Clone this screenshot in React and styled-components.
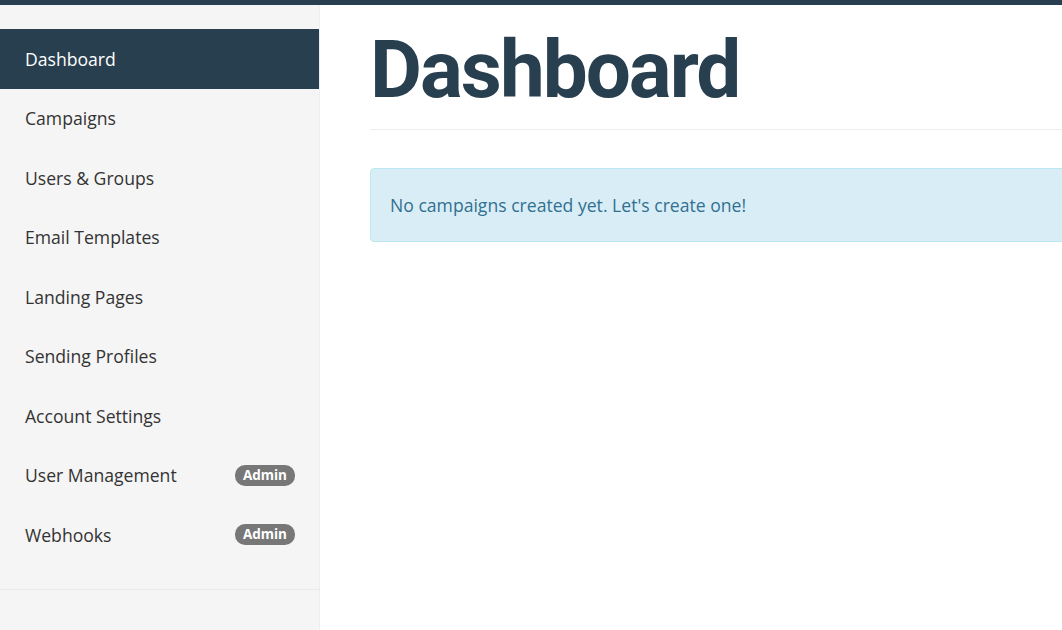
import React from 'react';
import styled, { createGlobalStyle } from 'styled-components';

const GlobalStyle = createGlobalStyle`
  html, body {
    margin: 0;
    padding: 0;
    background: #fff;
    overflow: hidden;
  }
  body {
    font-family: 'Open Sans', 'Liberation Sans', sans-serif;
    color: #333;
  }
`;

const TopBar = styled.div`
  height: 5px;
  background: #283f50;
`;

const Layout = styled.div`
  display: flex;
  height: 625px;
`;

const Sidebar = styled.nav`
  flex: 0 0 319px;
  background: #f5f5f5;
  border-right: 1px solid #eee;
  padding-top: 24px;
  display: flex;
  flex-direction: column;
`;

const NavList = styled.ul`
  list-style: none;
  margin: 0;
  padding: 0 0 24px;
  border-bottom: 1px solid #eaeaea;
`;

const NavItem = styled.li`
  height: 59.5px;
  display: flex;
  align-items: center;
  justify-content: space-between;
  padding: 0 24px 0 25px;
  font-size: 17.6px;
  color: ${({ $active }) => ($active ? '#fff' : '#333')};
  background: ${({ $active }) => ($active ? '#283f50' : 'transparent')};
`;

const Badge = styled.span`
  background: #777;
  color: #fff;
  font-weight: 700;
  font-size: 13.5px;
  border-radius: 10px;
  padding: 1px 8px 2px;
  line-height: 18px;
`;

const Main = styled.main`
  flex: 0 0 760px;
  padding: 0 0 0 50px;
`;

const Title = styled.h1`
  font-family: Roboto, 'Liberation Sans', sans-serif;
  font-weight: 700;
  font-size: 80px;
  letter-spacing: -2px;
  line-height: 1;
  color: #283f50;
  margin: 25px 0 0;
  padding-bottom: 19px;
  border-bottom: 1px solid #eee;
`;

const Alert = styled.div`
  margin-top: 38px;
  background: #d9edf7;
  border: 1px solid #bce8f1;
  border-radius: 4px;
  color: #31708f;
  font-size: 17.6px;
  padding: 24px 19px;
  line-height: 24px;
`;

const items = [
  { label: 'Dashboard', active: true },
  { label: 'Campaigns' },
  { label: 'Users & Groups' },
  { label: 'Email Templates' },
  { label: 'Landing Pages' },
  { label: 'Sending Profiles' },
  { label: 'Account Settings' },
  { label: 'User Management', admin: true },
  { label: 'Webhooks', admin: true },
];

const App = () => (
  <>
    <GlobalStyle />
    <TopBar />
    <Layout>
      <Sidebar>
        <NavList>
          {items.map((item) => (
            <NavItem key={item.label} $active={item.active}>
              <span>{item.label}</span>
              {item.admin && <Badge>Admin</Badge>}
            </NavItem>
          ))}
        </NavList>
      </Sidebar>
      <Main>
        <Title>Dashboard</Title>
        <Alert>No campaigns created yet. Let's create one!</Alert>
      </Main>
    </Layout>
  </>
);

export default App;
